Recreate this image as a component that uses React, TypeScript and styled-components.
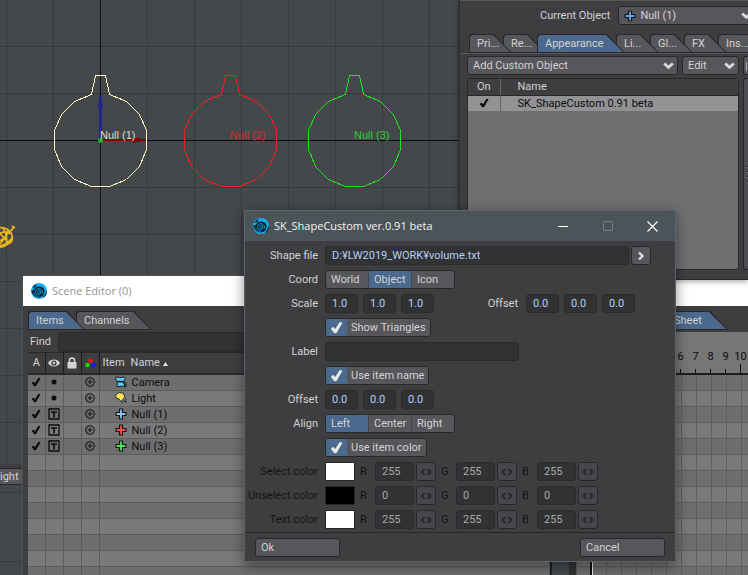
import React from "react";
import styled, { createGlobalStyle, css } from "styled-components";

const c = {
  panel: "#3e3e40",
  edge: "#28282a",
  button: "#57565b",
  field: "#323234",
  blue: "#4a698c",
  text: "#d2d2d2",
  value: "#b4d0f4",
};

const ui = 'Roboto, "Liberation Sans", Arial, sans-serif';
const titleFont = '"Open Sans", "Noto Sans", sans-serif';

const GlobalStyle = createGlobalStyle`
  * { box-sizing: border-box; }
  html, body, #root { height: 100%; margin: 0; }
  body { overflow: hidden; font: 11px/16px ${ui}; color: ${c.text}; background: ${c.panel}; }
  button, input, select { font: inherit; color: inherit; margin: 0; }
`;

const Desktop = styled.main`
  position: relative;
  height: 100vh;
  overflow: hidden;
`;

/* ---------- viewports ---------- */

const Viewports = styled.section`
  display: flex;
  flex-direction: column;
  height: 100%;
`;

const Perspective = styled.svg`
  display: block;
  width: 100%;
  height: 464px;
  background: #44484b;
  font: 11px "Liberation Sans", Arial, sans-serif;
`;

const ViewBar = styled.div`
  height: 21px;
  padding-top: 4px;
  background: ${c.panel};
`;

const ViewName = styled.button`
  display: block;
  width: 24px;
  height: 17px;
  padding: 0;
  border: 1px solid ${c.edge};
  border-left: 0;
  background: ${c.button};
  text-align: left;
  line-height: 15px;
`;

const LowerView = styled.div`
  flex: 1;
  background: linear-gradient(#3a3d3f 1px, transparent 1px) 0 7px / 100% 69px, #44484b;
`;

/* ---------- shared controls ---------- */

const raised = css`
  border: 1px solid ${c.edge};
  border-radius: 3px;
  background: ${c.button};
`;

const sunken = css`
  border: 1px solid #2b2b2d;
  border-radius: 3px;
  background: ${c.field};
`;

const Tabs = styled.div.attrs({ role: "tablist" })`
  display: flex;
  height: 19px;
`;

const Tab = styled.button.attrs({ role: "tab" })<{ $w: number; $z: number; $on?: boolean; $pad?: number }>`
  position: relative;
  z-index: ${(p) => p.$z};
  flex: none;
  width: ${(p) => p.$w}px;
  height: 19px;
  margin-right: -9px;
  padding: 0 0 0 ${(p) => p.$pad ?? 8}px;
  border: 0;
  background: ${c.edge};
  text-align: left;
  line-height: 19px;
  white-space: nowrap;
  clip-path: polygon(0 2px, 2px 0, calc(100% - 18px) 0, 100% 100%, 0 100%);
  &::before {
    content: "";
    position: absolute;
    inset: 1px 2px 1px 1px;
    background: ${(p) => (p.$on ? c.blue : c.button)};
    clip-path: polygon(0 2px, 2px 0, calc(100% - 17px) 0, 100% 100%, 0 100%);
  }
  span { position: relative; }
`;

const DropDown = styled.div<{ $grow?: boolean }>`
  ${raised}
  display: flex;
  align-items: center;
  gap: 4px;
  height: 19px;
  padding: 0 3px 0 5px;
  ${(p) => (p.$grow ? "flex: 1; min-width: 0;" : "flex: none; width: 57px;")}
  select {
    flex: 1;
    min-width: 0;
    width: 100%;
    height: 17px;
    padding: 0;
    border: 0;
    appearance: none;
    background: transparent;
    outline: 0;
  }
  svg { flex: none; pointer-events: none; }
`;

const Chevron = () => (
  <svg width="11" height="8" viewBox="0 0 11 8">
    <path d="M1.200 1.500 5.500 5.300 9.800 1.500" fill="none" stroke="#dcdcdc" strokeWidth="2.800" />
  </svg>
);

const Cross = ({ fill }: { fill: string }) => (
  <svg width="12" height="12" viewBox="0 0 12 12">
    <path
      d="M4.500 1h3v3.500H11v3H7.500V11h-3V7.500H1v-3h3.500z"
      fill={fill}
      stroke="#141414"
      strokeWidth="1.200"
      strokeLinejoin="round"
    />
  </svg>
);

const Tick = ({ size, fill }: { size: number; fill: string }) => (
  <svg width={size} height={size} viewBox="0 0 12 12">
    <path d="M.8 7.200 3 5.400 4.700 7.400 9 1 11.500 1.600 5.900 11.200 3.900 11.200z" fill={fill} />
  </svg>
);

const Logo = () => (
  <svg width="16" height="16" viewBox="0 0 16 16">
    <circle cx="8" cy="8" r="8" fill="#12b0f0" />
    <path
      d="M.3 7.500C2 7.800 2.800 6.800 3.800 5.400 5.200 3.500 7.500 3 10 3.700 12.300 4.400 13.500 6 13.600 8.200 13.600 10 13 11.600 11.800 12.800 9.500 15 5.500 14.800 3.200 12.800 1.500 11.300.5 9.500.3 7.500z"
      fill="#08212c"
    />
    <path d="M1.600 4.600 3.800 2 5.800 1.200 4.800 3.200 3 5z" fill="#08212c" />
    <path d="M12.500 13.500C14 12.500 15 10.500 15.200 8.500L16 8C16 11 14.800 13.800 12 15z" fill="#08212c" />
    <path
      d="M9.300 9.300a1.300 1.300 0 1 1-.6-1.800c1.700.8 1.600 3.300-.4 4-2.100.6-4-.9-3.800-3 .2-2 2.200-3.200 4.200-2.700 2.200.6 3.300 2.800 2.600 4.900"
      fill="none"
      stroke="#12b0f0"
      strokeWidth=".9"
    />
    <path d="M2.500 9.500c.6 2.200 2.600 3.900 5.200 3.900" fill="none" stroke="#12b0f0" strokeWidth=".7" />
  </svg>
);

/* ---------- object properties ---------- */

const Properties = styled.section`
  position: absolute;
  z-index: 2;
  top: 0;
  left: 458px;
  right: 0;
  height: 280px;
  padding-left: 9px;
  overflow: hidden;
  display: flex;
  flex-direction: column;
  border-left: 2px solid #2e2f31;
  border-bottom: 1px solid #2a2a2c;
  background: ${c.panel};
  box-shadow: 0 2px 5px rgba(0, 0, 0, 0.3);
`;

const CurrentObject = styled.label`
  display: flex;
  align-items: center;
  flex: none;
  gap: 8px;
  height: 27px;
  margin: 0 -8px 0 -9px;
  padding: 5px 0 2px 80px;
  border-top: 1px solid #58585a;
  > span { flex: none; }
`;

const PropTabs = styled(Tabs)`
  flex: none;
  margin-top: 7px;
`;

const PropBody = styled.div`
  display: grid;
  grid-template-columns: minmax(0, 1fr) 5px;
  grid-template-rows: 19px 192px;
  gap: 3px 4px;
  margin-left: -9px;
  padding: 2px 0 0 7px;
  border-top: 1px solid #58585a;
`;

const Tools = styled.div`
  display: flex;
  gap: 4px;
`;

const SideStub = styled.button`
  ${raised}
  border-right: 0;
  border-radius: 3px 0 0 3px;
  padding: 0;
  background: linear-gradient(#aaa, #aaa) 2px 5px / 1px 9px no-repeat, ${c.button};
`;

const SideScroll = styled.div`
  border: 1px solid ${c.edge};
  border-right: 0;
  border-radius: 3px 0 0 3px;
  background: repeating-linear-gradient(${c.edge} 0 1px, #77767a 1px 2px, transparent 2px 5px) 2px 87px / 3px 17px no-repeat, #4f4e53;
`;

const ListFrame = styled.div`
  border: 1px solid ${c.edge};
  border-radius: 3px;
  overflow: hidden;
  background: #6f6f71;
`;

const ShapeTable = styled.table`
  width: 100%;
  border-collapse: collapse;
  table-layout: fixed;
  th, td { height: 16px; padding: 0 0 0 17px; font-weight: 400; text-align: left; white-space: nowrap; line-height: 15px; }
  th { background: ${c.panel}; border-bottom: 1px solid ${c.edge}; }
  td { background: #929294; color: #0c0c0c; }
  th:first-child, td:first-child { width: 32px; padding: 0; text-align: center; border-right: 1px solid #67676a; }
  svg { display: block; margin: auto; }
`;

/* ---------- scene editor ---------- */

const SceneWindow = styled.section`
  position: absolute;
  z-index: 1;
  top: 275px;
  left: 22px;
  right: 0;
  bottom: 0;
  display: flex;
  flex-direction: column;
  border-left: 1px solid #4c4e50;
  border-top: 1px solid #4c4e50;
  background: ${c.panel};
  overflow: hidden;
`;

const SceneTitle = styled.header`
  display: flex;
  align-items: center;
  flex: none;
  gap: 5px;
  height: 30px;
  padding-left: 8px;
  background: #fff;
  color: #949494;
  font: 11px/20px ${titleFont};
`;

const ScenePanes = styled.div`
  display: flex;
  flex: 1;
  min-height: 0;
  padding-left: 5px;
`;

const ItemsPane = styled.div`
  flex: none;
  width: 524px;
  padding-top: 5px;
  border-right: 2px solid #202022;
  overflow: hidden;
`;

const FindRow = styled.label`
  display: flex;
  align-items: center;
  gap: 7px;
  height: 20px;
  margin-top: 2px;
  padding-left: 2px;
  input { ${sunken} flex: 1; height: 20px; min-width: 0; }
`;

const ItemTable = styled.table`
  width: 100%;
  border-collapse: collapse;
  table-layout: fixed;
  th, td { height: 16px; padding: 0; font-weight: 400; text-align: center; line-height: 15px; }
  thead th { height: 21px; border-right: 1px solid #1c1c1e; border-top: 1px solid #29292b; border-bottom: 2px solid #29292b; }
  thead th:last-child, tbody td:last-child { text-align: left; }
  tbody td { border-right: 1px solid #5c5c5c; border-bottom: 1px solid #5c5c5c; background: #6e6e6e; color: #0c0c0c; }
  tbody tr:nth-child(even) td { background: #797979; }
  svg { display: block; margin: auto; }
`;

const HeadName = styled.span`
  display: flex;
  align-items: center;
  gap: 6px;
  padding-left: 3px;
  svg { margin: 3px 0 0 -3px; }
`;

const ItemName = styled.span`
  display: flex;
  align-items: center;
  gap: 5px;
  padding-left: 15px;
  svg { margin: 0; }
`;

const Gutter = styled.div`
  flex: none;
  width: 24px;
  border-right: 7px solid #323234;
  background: #484b4e;
`;

const SheetPane = styled.div`
  flex: 1;
  min-width: 0;
  padding-top: 5px;
  overflow: hidden;
`;

const SheetTabs = styled(Tabs)`
  padding-left: 86px;
`;

const Ruler = styled.div`
  position: relative;
  display: flex;
  height: 43px;
  margin-top: 2px;
  padding: 17px 0 0 7px;
  border-bottom: 2px solid #1d1d1d;
  background: #767676;
  color: #0c0c0c;
  span {
    flex: none;
    width: 15px;
    height: 24px;
    display: flex;
    justify-content: center;
    background: linear-gradient(#0c0c0c, #0c0c0c) 7px 100% / 1px 4px no-repeat;
  }
  span:last-child { background-size: 1px 9px; }
`;

const Sheet = styled.div`
  height: 100%;
  background:
    linear-gradient(90deg, #111 0 2px, #e4e4e4 2px 3px) 14px 0 / 3px 100% no-repeat,
    repeating-linear-gradient(90deg, #5e5e5e 0 1px, transparent 1px 15px) 0 0 / 100% 100%,
    repeating-linear-gradient(#6e6e6e 0 15px, #5e5e5e 15px 16px, #797979 16px 31px, #5e5e5e 31px 32px);
`;

/* ---------- dialog ---------- */

const Dialog = styled.form`
  position: absolute;
  z-index: 3;
  top: 210px;
  left: 244px;
  width: 432px;
  border: 1px solid #59646b;
  background: ${c.panel};
  box-shadow: 0 4px 12px rgba(0, 0, 0, 0.45);
`;

const DialogTitle = styled.header`
  display: flex;
  align-items: center;
  height: 30px;
  padding-left: 8px;
  background: #4b5459;
  color: #f4f4f4;
  font: 11px/20px ${titleFont};
  h1 { flex: 1; margin: 0 0 0 5px; font: inherit; }
`;

const WindowButton = styled.button`
  display: grid;
  place-items: center;
  width: 45px;
  height: 30px;
  padding: 0;
  border: 0;
  background: none;
`;

const Fields = styled.div`
  display: grid;
  gap: 5px;
  padding: 5px 0 3px;
`;

const Field = styled.div<{ $dim?: boolean }>`
  display: grid;
  grid-template-columns: 73px minmax(0, 1fr);
  column-gap: 7px;
  align-items: center;
  height: 19px;
  > :first-child { text-align: right; white-space: nowrap; justify-self: end; }
  ${(p) => p.$dim && "color: #141414;"}
`;

const Controls = styled.div`
  display: flex;
  align-items: center;
  gap: 5px;
`;

const ShapeFile = styled(Controls)`
  gap: 2px;
  padding-right: 24px;
`;

const TextBox = styled.input<{ $w?: number; $dim?: boolean }>`
  ${sunken}
  height: 19px;
  padding: 0 0 0 6px;
  color: ${(p) => (p.$dim ? "#a9a9a9" : c.value)};
  ${(p) => (p.$w ? `width: ${p.$w}px;` : "flex: 1; min-width: 0;")}
`;

const IconButton = styled.button<{ $dim?: boolean }>`
  ${raised}
  display: grid;
  place-items: center;
  flex: none;
  width: 20px;
  height: 19px;
  padding: 0;
  ${(p) => p.$dim && "background: #47464b;"}
`;

const Segments = styled.div`
  ${raised}
  display: flex;
  width: 130px;
  height: 19px;
  overflow: hidden;
  label {
    flex: 1;
    padding-left: 5px;
    line-height: 17px;
    border-right: 1px solid #454448;
  }
  label:last-child { border-right: 0; }
  label:has(:checked) { background: ${c.blue}; }
  input { position: absolute; opacity: 0; pointer-events: none; }
`;

const CheckLabel = styled.label`
  ${raised}
  display: inline-grid;
  grid-template-columns: 22px auto;
  align-items: center;
  height: 19px;
  padding-right: 4px;
  overflow: hidden;
  line-height: 17px;
  input { grid-area: 1 / 1; width: 21px; height: 17px; appearance: none; }
  input:checked { background: ${c.blue}; }
  svg { grid-area: 1 / 1; margin-left: 4px; pointer-events: none; }
  span { grid-area: 1 / 2; padding-left: 3px; }
`;

const OffsetLabel = styled.span`
  margin-left: auto;
  padding-right: 3px;
`;

const ScaleRow = styled(Controls)`
  padding-right: 40px;
`;

const Swatch = styled.button<{ $color: string }>`
  flex: none;
  width: 30px;
  height: 19px;
  padding: 0;
  border: 1px solid ${c.edge};
  background: ${(p) => p.$color};
`;

const Channels = styled.div`
  display: flex;
`;

const Channel = styled.label`
  display: flex;
  align-items: center;
  > span { width: 20px; padding-left: 5px; }
  button { margin-left: 2px; }
`;

const Footer = styled.footer`
  display: flex;
  justify-content: space-between;
  padding: 5px 10px 4px;
  border-top: 1px solid ${c.edge};
`;

const Action = styled.button`
  ${raised}
  width: 85px;
  height: 19px;
  padding: 0 0 0 5px;
  text-align: left;
  line-height: 17px;
`;

/* ---------- pieces ---------- */

const NULL_SHAPE =
  "-5,-65 5,-65 9,-46 26,-39 39,-26 46,-10 46,9 39,26 26,39 9,46 -9,46 -26,39 -39,26 -46,9 -46,-10 -39,-26 -26,-39 -9,-46";

const shapes = [
  { x: 100.5, color: "#fbfbc4", label: "#dcdccb", name: "Null (1)" },
  { x: 230.5, color: "#ee2020", label: "#d62c2e", name: "Null (2)" },
  { x: 354.5, color: "#1ee01e", label: "#2ccc34", name: "Null (3)" },
];

const View = () => (
  <Viewports>
    <Perspective>
      <defs>
        <pattern id="grid" x="6" y="46" width="47" height="47" patternUnits="userSpaceOnUse">
          <path d="M0 0H1V47H0zM0 0H47V1H0z" fill="#393a3c" />
        </pattern>
      </defs>
      <rect width="100%" height="100%" fill="url(#grid)" />
      <path d="M100.500 0V464M0 140.500H458" stroke="#0c0c0c" />
      {shapes.map((s) => (
        <polygon
          key={s.name}
          points={NULL_SHAPE}
          transform={`translate(${s.x} 140.500)`}
          fill="none"
          stroke={s.color}
          shapeRendering="crispEdges"
        />
      ))}
      <g shapeRendering="crispEdges">
        <path d="M99 96h3v44h-3z" fill="#25258c" />
        <path d="M97.500 106.500 100.500 97 103.500 106.500z" fill="#25258c" />
        <path d="M101 139h45v2h-45z" fill="#7c0404" />
        <path d="M133 137.500h3l6 1.500v2l-6 1.500h-3z" fill="#7c0404" />
      </g>
      <circle cx="100.500" cy="140.500" r="2.500" fill="#1eb41e" />
      {shapes.map((s) => (
        <text key={s.name} x={s.x - 0.5} y="139" fill={s.label}>
          {s.name}
        </text>
      ))}
      <g fill="none" stroke="#e8b422" strokeWidth="1.800">
        <path d="M-4 229c5-3 12-1 15 4 3 6 1 9-3 11-4 3-7 4-12 3M-2 235c4-4 9-4 12-1M-1 241c5-1 8-5 9-11M2 227c4 5 6 10 4 18M0 246c4-1 9-4 12-8" />
        <path d="M9 233l5-6M12 226l3 2M-3 230l9 10M-2 246l8-9" />
      </g>
    </Perspective>
    <ViewBar>
      <ViewName>ight</ViewName>
    </ViewBar>
    <LowerView />
  </Viewports>
);

const propTabs = [
  { t: "Pri...", w: 43 },
  { t: "Re...", w: 43 },
  { t: "Appearance", w: 88, on: true },
  { t: "Li...", w: 43 },
  { t: "Gl...", w: 43 },
  { t: "FX", w: 43 },
  { t: "Ins...", w: 50 },
];

const PropertiesPanel = () => (
  <Properties aria-label="Object properties">
    <CurrentObject>
      <span>Current Object</span>
      <DropDown $grow>
        <Cross fill="#5aa5f2" />
        <select>
          <option>Null (1)</option>
        </select>
        <Chevron />
      </DropDown>
    </CurrentObject>
    <PropTabs>
      {propTabs.map((p, i) => (
        <Tab key={p.t} type="button" $w={p.w} $z={p.on ? 10 : 8 - i} $on={p.on} aria-selected={!!p.on}>
          <span>{p.t}</span>
        </Tab>
      ))}
    </PropTabs>
    <PropBody>
      <Tools>
        <DropDown $grow>
          <select aria-label="Add Custom Object">
            <option>Add Custom Object</option>
          </select>
          <Chevron />
        </DropDown>
        <DropDown>
          <select aria-label="Edit">
            <option>Edit</option>
          </select>
          <Chevron />
        </DropDown>
      </Tools>
      <SideStub type="button" aria-label="Options" />
      <ListFrame>
        <ShapeTable>
          <thead>
            <tr>
              <th>On</th>
              <th>Name</th>
            </tr>
          </thead>
          <tbody>
            <tr>
              <td>
                <Tick size={10} fill="#0c0c0c" />
              </td>
              <td>SK_ShapeCustom 0.91 beta</td>
            </tr>
          </tbody>
        </ShapeTable>
      </ListFrame>
      <SideScroll />
    </PropBody>
  </Properties>
);

const Eye = () => (
  <svg width="12" height="8" viewBox="0 0 12 8">
    <path d="M0 4C2.500-.6 9.500-.6 12 4 9.500 8.600 2.500 8.600 0 4z" fill="#d4d4d4" />
    <circle cx="6" cy="4" r="2.600" fill="#3e3e40" />
    <circle cx="6" cy="4" r="1.200" fill="#d4d4d4" />
  </svg>
);

const Lock = () => (
  <svg width="10" height="12" viewBox="0 0 10 12">
    <path d="M2.500 6V3.500a2.500 2.500 0 0 1 5 0V6" fill="none" stroke="#d4d4d4" strokeWidth="1.600" />
    <rect x=".5" y="5" width="9" height="6.500" fill="#d4d4d4" />
  </svg>
);

const Rgb = () => (
  <svg width="11" height="10" viewBox="0 0 11 10">
    <circle cx="5.500" cy="2.700" r="2.300" fill="#f01414" />
    <circle cx="2.500" cy="7" r="2.300" fill="#14d814" />
    <circle cx="8.500" cy="7" r="2.300" fill="#1c1cf0" />
  </svg>
);

const Dot = () => (
  <svg width="6" height="6" viewBox="0 0 6 6">
    <circle cx="3" cy="3" r="2.500" fill="#0c0c0c" />
  </svg>
);

const BoxT = () => (
  <svg width="12" height="12" viewBox="0 0 12 12">
    <path d="M1 1h10v10H1z" fill="none" stroke="#0c0c0c" strokeWidth="1.300" />
    <path d="M3 4h6M6 4v5.500" stroke="#0c0c0c" strokeWidth="1.600" />
  </svg>
);

const Expand = () => (
  <svg width="10" height="10" viewBox="0 0 10 10">
    <circle cx="5" cy="5" r="4.300" fill="none" stroke="#141414" strokeWidth="1.100" />
    <path d="M2.500 5h5M5 2.500v5" stroke="#141414" strokeWidth="1.200" />
  </svg>
);

const CameraIcon = () => (
  <svg width="12" height="12" viewBox="0 0 12 12">
    <path
      d="M.8 1.200H4.800l1 .8 1-.8H9.600l.6 1.500-.8 2.600H2L.7 4z"
      fill="#5fcbfa"
      stroke="#111"
      strokeWidth=".9"
      strokeLinejoin="round"
    />
    <path d="M2 6h6.500v1.500L11 6.500V11L8.500 10 2.200 10.800z" fill="#5fcbfa" stroke="#111" strokeWidth=".9" strokeLinejoin="round" />
    <path d="M9.800 7.500v3" stroke="#111" strokeWidth="1.500" />
  </svg>
);

const LightIcon = () => (
  <svg width="12" height="12" viewBox="0 0 12 12">
    <path d="M.6 3 3.800.6 8.600 1.200 9.600 5.400 5.800 9.600 4 7 .9 6z" fill="#ffe45a" stroke="#222" strokeWidth=".9" strokeLinejoin="round" />
    <path d="M10 6.500l1.500 1M8.500 8l2.800 2.800M6.800 9.600l1.200 2M9.500 9l2 .6" stroke="#222" />
  </svg>
);

const items = [
  { name: "Camera", icon: <CameraIcon /> },
  { name: "Light", icon: <LightIcon /> },
  { name: "Null (1)", icon: <Cross fill="#8ec2f6" />, text: true },
  { name: "Null (2)", icon: <Cross fill="#ee5252" />, text: true },
  { name: "Null (3)", icon: <Cross fill="#56e456" />, text: true },
];

const emptyRows = Array.from({ length: 10 }, (_, i) => i);
const frames = Array.from({ length: 11 }, (_, i) => i);

const SceneEditor = () => (
  <SceneWindow aria-label="Scene Editor">
    <SceneTitle>
      <Logo />
      <span>Scene Editor (0)</span>
    </SceneTitle>
    <ScenePanes>
      <ItemsPane>
        <Tabs>
          <Tab type="button" $w={57} $z={2} $on aria-selected>
            <span>Items</span>
          </Tab>
          <Tab type="button" $w={76} $z={1}>
            <span>Channels</span>
          </Tab>
        </Tabs>
        <FindRow>
          Find
          <input type="text" />
        </FindRow>
        <ItemTable>
          <colgroup>
            <col width="17" />
            <col width="18" />
            <col width="18" />
            <col width="18" />
            <col />
          </colgroup>
          <thead>
            <tr>
              <th>A</th>
              <th aria-label="Visibility"><Eye /></th>
              <th aria-label="Lock"><Lock /></th>
              <th aria-label="Color"><Rgb /></th>
              <th>
                <HeadName>
                  <span>Item</span>
                  <span>Name</span>
                  <svg width="5" height="4" viewBox="0 0 5 4">
                    <path d="M0 4 2.500 0 5 4z" fill="#e4e4e4" />
                  </svg>
                </HeadName>
              </th>
            </tr>
          </thead>
          <tbody>
            {items.map((it) => (
              <tr key={it.name}>
                <td><Tick size={10} fill="#0c0c0c" /></td>
                <td>{it.text ? <BoxT /> : <Dot />}</td>
                <td />
                <td><Expand /></td>
                <td>
                  <ItemName>
                    {it.icon}
                    {it.name}
                  </ItemName>
                </td>
              </tr>
            ))}
            {emptyRows.map((n) => (
              <tr key={n}>
                <td /><td /><td /><td /><td />
              </tr>
            ))}
          </tbody>
        </ItemTable>
      </ItemsPane>
      <Gutter />
      <SheetPane>
        <SheetTabs>
          <Tab type="button" $w={66} $z={1} $on $pad={12} aria-selected>
            <span>Sheet</span>
          </Tab>
        </SheetTabs>
        <Ruler>
          {frames.map((f) => (
            <span key={f}>{f}</span>
          ))}
        </Ruler>
        <Sheet />
      </SheetPane>
    </ScenePanes>
  </SceneWindow>
);

const Triple = ({ value, label }: { value: string; label: string }) => (
  <>
    {["X", "Y", "Z"].map((axis) => (
      <TextBox key={axis} $w={33} defaultValue={value} aria-label={`${label} ${axis}`} />
    ))}
  </>
);

const Choice = ({ name, options, value }: { name: string; options: string[]; value: string }) => (
  <Segments role="radiogroup" aria-label={name}>
    {options.map((o) => (
      <label key={o}>
        <input type="radio" name={name} defaultChecked={o === value} />
        {o}
      </label>
    ))}
  </Segments>
);

const Check = ({ children }: { children: string }) => (
  <Controls>
    <CheckLabel>
      <input type="checkbox" defaultChecked />
      <Tick size={13} fill="#e6e6e6" />
      <span>{children}</span>
    </CheckLabel>
  </Controls>
);

const ColorRow = ({ label, color, value }: { label: string; color: string; value: string }) => (
  <Field $dim>
    <span>{label}</span>
    <Channels>
      <Swatch type="button" $color={color} aria-label={label} />
      {["R", "G", "B"].map((ch) => (
        <Channel key={ch}>
          <span>{ch}</span>
          <TextBox $w={39} $dim defaultValue={value} />
          <IconButton type="button" $dim aria-label={`Adjust ${ch}`}>
            <svg width="12" height="8" viewBox="0 0 12 8">
              <path d="M4.500 1 1.500 4 4.500 7M7.500 1 10.500 4 7.500 7" fill="none" stroke="#232325" strokeWidth="1.700" />
            </svg>
          </IconButton>
        </Channel>
      ))}
    </Channels>
  </Field>
);

const ShapeDialog = () => (
  <Dialog onSubmit={(e: React.FormEvent) => e.preventDefault()}>
    <DialogTitle>
      <Logo />
      <h1>SK_ShapeCustom ver.0.91 beta</h1>
      <WindowButton type="button" aria-label="Minimize">
        <svg width="10" height="10"><path d="M0 5.500H10" stroke="#fff" /></svg>
      </WindowButton>
      <WindowButton type="button" aria-label="Maximize">
        <svg width="10" height="10"><path d="M.5.5h9v9h-9z" fill="none" stroke="#747b7f" /></svg>
      </WindowButton>
      <WindowButton type="button" aria-label="Close">
        <svg width="11" height="11"><path d="M.5.5 10.500 10.500M10.500.5.5 10.500" stroke="#fff" strokeWidth="1.200" /></svg>
      </WindowButton>
    </DialogTitle>
    <Fields>
      <Field>
        <label htmlFor="shape-file">Shape file</label>
        <ShapeFile>
          <TextBox id="shape-file" defaultValue="D:¥LW2019_WORK¥volume.txt" />
          <IconButton type="button" aria-label="Browse">
            <svg width="8" height="10" viewBox="0 0 8 10">
              <path d="M2 1.500 5.500 5 2 8.500" fill="none" stroke="#e0e0e0" strokeWidth="2.200" />
            </svg>
          </IconButton>
        </ShapeFile>
      </Field>
      <Field>
        <span>Coord</span>
        <Choice name="Coord" options={["World", "Object", "Icon"]} value="Object" />
      </Field>
      <Field>
        <span>Scale</span>
        <ScaleRow>
          <Triple value="1.0" label="Scale" />
          <OffsetLabel>Offset</OffsetLabel>
          <Triple value="0.0" label="Offset" />
        </ScaleRow>
      </Field>
      <Field>
        <span />
        <Check>Show Triangles</Check>
      </Field>
      <Field>
        <label htmlFor="label-text">Label</label>
        <Controls>
          <TextBox id="label-text" $w={194} />
        </Controls>
      </Field>
      <Field>
        <span />
        <Check>Use item name</Check>
      </Field>
      <Field>
        <span>Offset</span>
        <Controls>
          <Triple value="0.0" label="Label offset" />
        </Controls>
      </Field>
      <Field>
        <span>Align</span>
        <Choice name="Align" options={["Left", "Center", "Right"]} value="Left" />
      </Field>
      <Field>
        <span />
        <Check>Use item color</Check>
      </Field>
      <ColorRow label="Select color" color="#fff" value="255" />
      <ColorRow label="Unselect color" color="#000" value="0" />
      <ColorRow label="Text color" color="#fff" value="255" />
    </Fields>
    <Footer>
      <Action type="submit">Ok</Action>
      <Action type="button">Cancel</Action>
    </Footer>
  </Dialog>
);

export default function App() {
  return (
    <>
      <GlobalStyle />
      <Desktop>
        <View />
        <SceneEditor />
        <PropertiesPanel />
        <ShapeDialog />
      </Desktop>
    </>
  );
}
